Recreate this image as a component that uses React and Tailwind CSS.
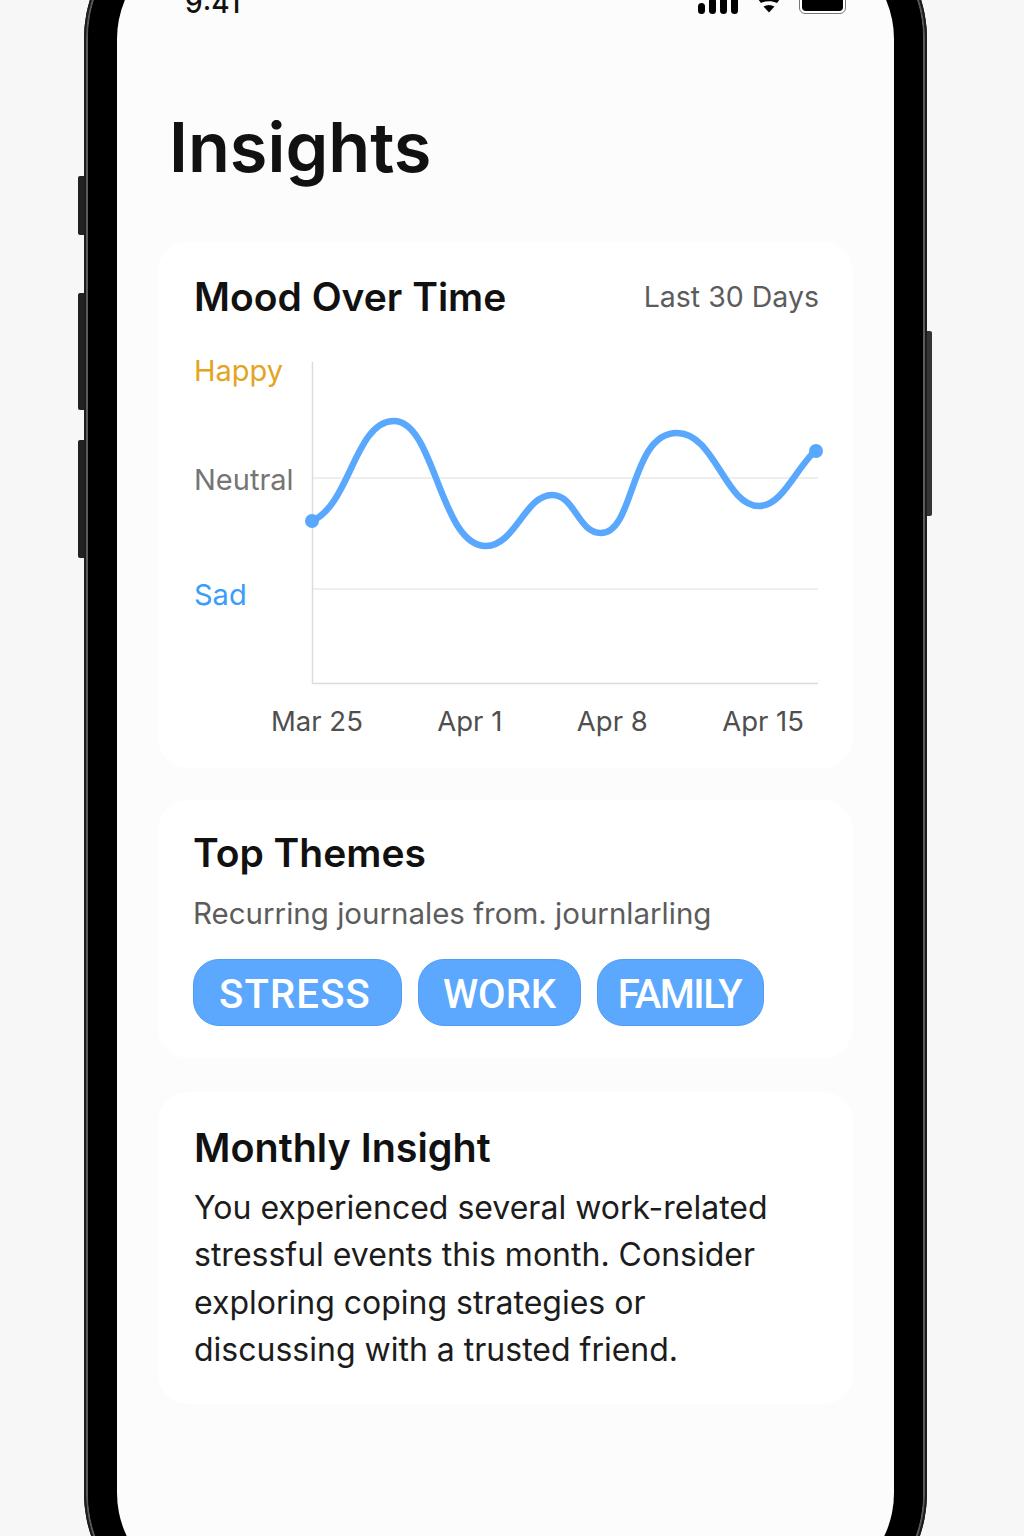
const sans = "font-['Inter','Liberation_Sans',sans-serif]";

const moodLine =
  "M312 521 C 350 505, 355 421, 394 421 C 435 421, 440 546, 486 546 C 515 546, 525 495, 552 495 C 575 495, 578 533, 601 533 C 635 533, 630 433, 677 433 C 715 433, 725 506, 759 506 C 782 506, 795 470, 815 451";

function StatusBar() {
  return (
    <div className="flex h-[75px] items-end justify-between pl-[68px] pr-[48px]">
      <span className="text-[28px] leading-[22px] font-medium text-[#111]">9:41</span>
      <div className="flex items-end">
        <div className="flex items-end gap-[4px]">
          <div className="h-[11px] w-[7px] rounded-[3.5px] bg-black" />
          <div className="h-[16px] w-[7px] rounded-[3.5px] bg-black" />
          <div className="h-[20px] w-[7px] rounded-[3.5px] bg-black" />
          <div className="h-[20px] w-[7px] rounded-[3.5px] bg-black" />
        </div>
        <svg width="22" height="16" viewBox="0 0 22 16" className="mb-px ml-[20px]" aria-hidden="true">
          <path d="M0 2 C 6 -1, 16 -1, 22 2 L 19 6 C 14 3.5, 8 3.5, 3 6 Z" fill="#000" />
          <path d="M5.5 9.5 C 9 7.5, 13 7.5, 16.5 9.5 L 11 15.5 Z" fill="#000" />
        </svg>
        <div className="ml-[19px] h-[30px] w-[47px] rounded-[6px] border border-[#777] bg-white p-[2px]">
          <div className="h-full rounded-[4px] bg-black" />
        </div>
      </div>
    </div>
  );
}

function MoodCard() {
  return (
    <section className="h-[526px] rounded-[30px] bg-white pl-[36px] pr-[34px] pt-[30px]">
      <div className="flex items-center justify-between">
        <h2 className="text-[39px] leading-[50px] font-semibold text-[#111]">Mood Over Time</h2>
        <span className="text-[28.5px] leading-[50px] text-[#5c5c5c]">Last 30 Days</span>
      </div>
      <div className="mt-[31px] flex">
        <div className="flex w-[111px] shrink-0 flex-col text-[29px] leading-[36px]">
          <span className="text-[#e3a41f]">Happy</span>
          <span className="mt-[73px] text-[#757575]">Neutral</span>
          <span className="mt-[79px] text-[#3b9dfb]">Sad</span>
        </div>
        <svg width="525" height="335" viewBox="305 355 525 335" className="mt-[2px] shrink-0" aria-hidden="true">
          <line x1="313" y1="478" x2="818" y2="478" stroke="#eeeeee" strokeWidth="2" />
          <line x1="313" y1="589" x2="818" y2="589" stroke="#e8e8e8" strokeWidth="1.5" />
          <path d="M312.5 362 V683.5 H818" fill="none" stroke="#dcdcdc" strokeWidth="1.5" />
          <path d={moodLine} fill="none" stroke="#5aa7fe" strokeWidth="6.5" strokeLinecap="round" />
          <circle cx="312" cy="521" r="7" fill="#5aa7fe" />
          <circle cx="816" cy="451" r="7" fill="#5aa7fe" />
        </svg>
      </div>
      <div className="mt-[13px] flex justify-between pl-[77px] pr-[15px] text-[27.5px] leading-[36px] text-[#4f4f4f]">
        <span>Mar 25</span>
        <span>Apr 1</span>
        <span>Apr 8</span>
        <span>Apr 15</span>
      </div>
    </section>
  );
}

function Tag({ label, className }) {
  return (
    <span
      className={`flex h-[67px] items-center justify-center rounded-[26px] border border-[#4f9df5] bg-[#5ba8fe] pt-[4px] font-['Roboto',sans-serif] text-[40px] font-medium text-white ${className}`}
    >
      {label}
    </span>
  );
}

function ThemesCard() {
  return (
    <section className="mt-[32px] h-[258px] rounded-[30px] bg-white pl-[35px] pt-[28px]">
      <h2 className="text-[39px] leading-[50px] font-semibold text-[#111]">Top Themes</h2>
      <p className="mt-[15px] text-[29.5px] leading-[40px] text-[#5c5c5c]">
        Recurring journales from. journlarling
      </p>
      <div className="mt-[26px] flex gap-[16px]">
        <Tag label="STRESS" className="w-[209px] pr-[5px] tracking-[1.2px]" />
        <Tag label="WORK" className="w-[163px]" />
        <Tag label="FAMILY" className="w-[167px] pr-[2px] tracking-[-1.5px]" />
      </div>
    </section>
  );
}

function InsightCard() {
  return (
    <section className="mt-[34px] h-[312px] rounded-[30px] bg-white pl-[36px] pr-[60px] pt-[31px]">
      <h2 className="text-[39.5px] leading-[50px] font-semibold text-[#111]">Monthly Insight</h2>
      <p className="mt-[11px] text-[32px] leading-[47.4px] text-[#1c1c1c]">
        You experienced several work-related stressful events this month. Consider exploring coping strategies or
        discussing with a trusted friend.
      </p>
    </section>
  );
}

export default function App() {
  return (
    <div className={`h-[1536px] overflow-hidden bg-[#f7f7f7] ${sans}`}>
      <div className="relative mt-[-94px] ml-[84px] h-[1720px] w-[843px] rounded-[133px] bg-black">
        {/* side buttons */}
        <div className="absolute left-[-6px] top-[270px] h-[59px] w-[6px] rounded-l-[2px] bg-[#222]" />
        <div className="absolute left-[-6px] top-[387px] h-[117px] w-[6px] rounded-l-[2px] bg-[#222]" />
        <div className="absolute left-[-6px] top-[534px] h-[118px] w-[6px] rounded-l-[2px] bg-[#222]" />
        <div className="absolute right-[-5px] top-[425px] h-[185px] w-[5px] rounded-r-[2px] bg-[#333]" />

        <div className="h-full rounded-[133px] border-[2px] border-[#1c1c1c]">
          <div className="h-full rounded-[131px] border-[2px] border-[#5a5a5a]">
            <div className="h-full rounded-[129px] bg-black pl-[29px] pr-[29px] pt-[29px]">
              <div className="h-[1654px] w-[777px] overflow-hidden rounded-[100px] bg-[#fcfcfc]">
                <StatusBar />
                <h1 className="mt-[94px] pl-[52px] text-[68.5px] leading-[80px] font-semibold text-[#111]">Insights</h1>
                <div className="mt-[54px] px-[41px]">
                  <MoodCard />
                  <ThemesCard />
                  <InsightCard />
                </div>
              </div>
            </div>
          </div>
        </div>
      </div>
    </div>
  );
}
